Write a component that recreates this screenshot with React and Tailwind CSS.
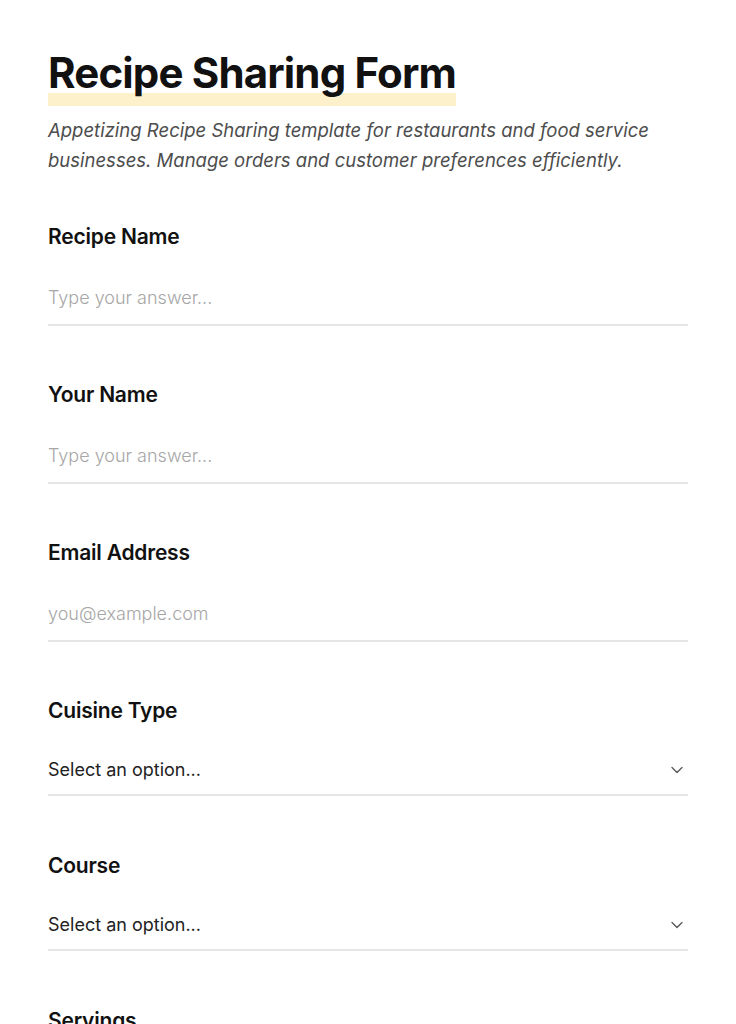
import React from 'react'
import { ChevronDown } from 'lucide-react'

const fields = [
  { label: 'Recipe Name', type: 'text', placeholder: 'Type your answer...' },
  { label: 'Your Name', type: 'text', placeholder: 'Type your answer...' },
  { label: 'Email Address', type: 'email', placeholder: 'you@example.com' },
  { label: 'Cuisine Type', type: 'select' },
  { label: 'Course', type: 'select' },
  { label: 'Servings', type: 'text', placeholder: 'Type your answer...' },
]

function Field({ label, type, placeholder }) {
  return (
    <div className={type === 'select' ? 'mb-[56px]' : 'mb-[55px]'}>
      <label className="block text-[21px] leading-[28px] font-semibold text-[#111] tracking-[-0.01em] mb-[21px]">{label}</label>
      {type === 'select' ? (
        <div className="flex items-center justify-between border-b-2 border-[#e5e5e5] pt-[10px] pb-[10px]">
          <span className="text-[18px] leading-[28px] text-[#222]">Select an option...</span>
          <ChevronDown size={20} strokeWidth={1.5} className="text-[#555] mr-[1px]" />
        </div>
      ) : (
        <input
          type={type}
          placeholder={placeholder}
          className="block w-full border-b-2 border-[#e5e5e5] pt-[12px] pb-[12px] text-[18px] leading-[28px] font-light text-[#222] placeholder:text-[#a6a6a6] outline-none bg-transparent"
        />
      )}
    </div>
  )
}

export default function App() {
  return (
    <div className="min-h-screen bg-white" style={{ fontFamily: 'Inter, "Noto Sans", sans-serif' }}>
      <div className="w-[640px] mx-auto pt-[49px]">
        <h1 className="inline-block text-[42px] leading-[48px] font-bold tracking-[-0.02em] text-[#111] pb-[9px] bg-[linear-gradient(to_top,#fdf1cc_13px,transparent_13px)]">
          Recipe Sharing Form
        </h1>
        <p className="mt-[9px] text-[18.5px] leading-[30px] italic text-[#4d4d4d]">
          Appetizing Recipe Sharing template for restaurants and food service businesses. Manage orders and customer preferences efficiently.
        </p>
        <div className="mt-[48px]">
          {fields.map((f) => (
            <Field key={f.label} {...f} />
          ))}
        </div>
      </div>
    </div>
  )
}
